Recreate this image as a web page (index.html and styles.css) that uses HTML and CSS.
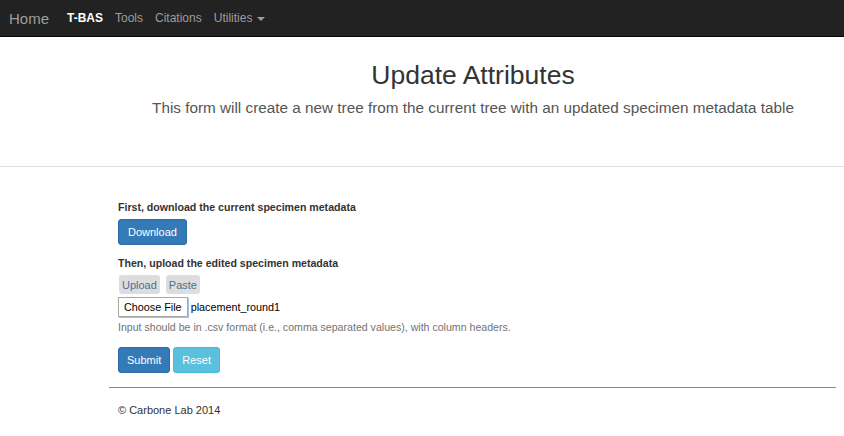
FILE: index.html
```html
<!DOCTYPE html>
<html>
<head>
<meta charset="utf-8">
<link rel="stylesheet" href="styles.css">
</head>
<body>
<nav class="navbar">
  <a class="brand">Home</a>
  <ul class="nav">
    <li class="active">T-BAS</li>
    <li>Tools</li>
    <li>Citations</li>
    <li>Utilities <span class="caret"></span></li>
  </ul>
</nav>
<header class="header">
  <h2 class="title">Update Attributes</h2>
  <p class="lead">This form will create a new tree from the current tree with an updated specimen metadata table</p>
</header>
<hr class="divider">
<main class="content">
  <div class="group">
    <label class="label">First, download the current specimen metadata</label>
    <button class="btn btn-primary">Download</button>
  </div>
  <div class="group">
    <label class="label">Then, upload the edited specimen metadata</label>
    <div class="tabs">
      <span class="tab">Upload</span>
      <span class="tab">Paste</span>
    </div>
    <div class="file-row">
      <span class="file-btn">Choose File</span>
      <span class="file-name">placement_round1</span>
    </div>
    <p class="help">Input should be in .csv format (i.e., comma separated values), with column headers.</p>
  </div>
  <div class="actions">
    <button class="btn btn-primary">Submit</button>
    <button class="btn btn-info">Reset</button>
  </div>
</main>
<footer class="footer">
  <hr class="footer-rule">
  <p class="copy">© Carbone Lab 2014</p>
</footer>
</body>
</html>
```
FILE: styles.css
```css
* { box-sizing: border-box; }
body {
  margin: 0;
  font-family: "Liberation Sans", Arial, sans-serif;
  font-size: 11px;
  color: #333;
  background: #fff;
}
.navbar {
  height: 37px;
  background: #222;
  border-bottom: 1px solid #080808;
  display: flex;
  align-items: center;
  padding-left: 9px;
}
.brand {
  font-size: 15px;
  color: #9d9d9d;
  margin-right: 18px;
  margin-top: 1px;
}
.nav {
  list-style: none;
  margin: 0;
  padding: 0;
  display: flex;
  gap: 12px;
  font-size: 12px;
  color: #9d9d9d;
}
.nav .active { color: #fff; font-weight: bold; }
.caret {
  display: inline-block;
  width: 0; height: 0;
  border-top: 4px solid #9d9d9d;
  border-left: 4px solid transparent;
  border-right: 4px solid transparent;
  vertical-align: middle;
  margin-left: 1px;
}
.header {
  padding-left: 102px;
  text-align: center;
  padding-top: 22px;
}
.title {
  margin: 0;
  font-size: 26.5px;
  font-weight: normal;
  color: #333;
  line-height: 32px;
}
.lead {
  margin: 7px 0 0;
  font-size: 15.3px;
  color: #555;
  line-height: 20px;
}
.divider {
  margin: 48px 0 0;
  border: 0;
  border-top: 1px solid #ddd;
}
.content {
  padding-left: 118px;
  padding-top: 33px;
}
.group { margin-bottom: 11px; }
.label {
  display: block;
  font-weight: bold;
  font-size: 10.6px;
  line-height: 14px;
  margin-bottom: 5px;
}
.btn {
  font-family: inherit;
  font-size: 11px;
  line-height: 14px;
  padding: 5px 9px;
  border-radius: 3px;
  border: 1px solid transparent;
  color: #fff;
  margin: 0;
}
.btn-primary { background: #337ab7; border-color: #2e6da4; }
.btn-info { background: #5bc0de; border-color: #46b8da; }
.tabs { display: flex; gap: 6px; padding-left: 1px; margin-bottom: 3px; }
.tab {
  background: #ddd;
  color: #4a6f9c;
  border-radius: 3px;
  padding: 3px 3px 2px;
  line-height: 14px;
}
.file-row { display: flex; align-items: center; gap: 3px; }
.file-btn {
  border: 1px solid #a9a9a9;
  box-shadow: 1px 1px 0 #9cc0e6;
  padding: 3px 5px 2px;
  line-height: 13px;
  font-size: 10.8px;
  color: #000;
  background: #fff;
}
.file-name { color: #000; font-size: 10.8px; }
.help { margin: 3px 0 0; color: #737373; line-height: 14px; font-size: 10.6px; }
.actions { display: flex; gap: 3px; padding-top: 2px; }
.actions .btn { padding: 5px 8px; }
.footer { padding-left: 109px; padding-right: 8px; }
.footer-rule { margin: 14px 0 0; border: 0; border-top: 1px solid #888; }
.copy { margin: 15px 0 0; padding-left: 9px; line-height: 14px; }
```
